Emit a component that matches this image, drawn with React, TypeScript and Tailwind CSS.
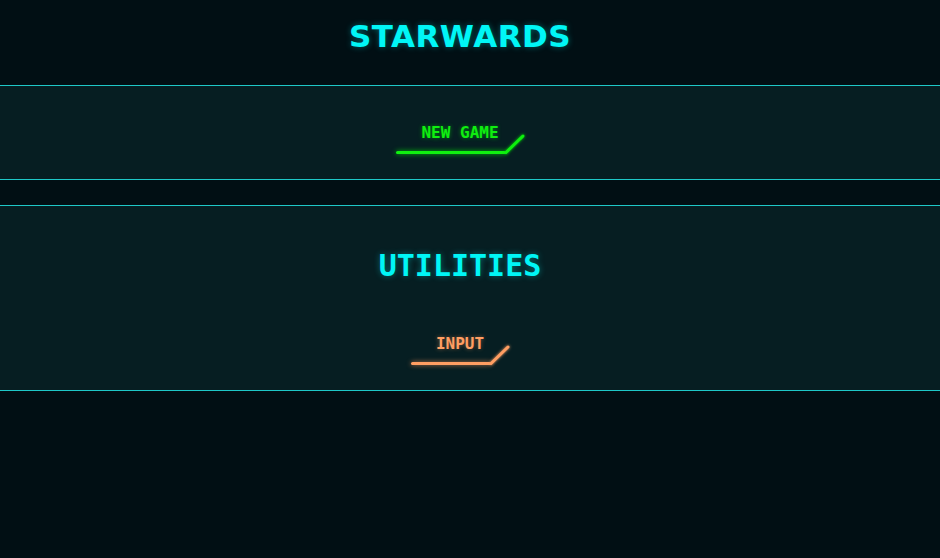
function GlowButton({ label, color }: { label: string; color: "green" | "orange" }) {
    const isGreen = color === "green";
    const stroke = isGreen ? "#10f010" : "#ff9e62";
    return (
        <button className="flex flex-col items-stretch bg-transparent cursor-pointer">
            <span
                className={`px-[25px] h-5 leading-5 text-[16px] font-bold ${
                    isGreen
                        ? "text-[#10ee10] [text-shadow:0_0_4px_rgba(0,255,0,0.45)]"
                        : "text-[#ff9e62] [text-shadow:0_0_4px_rgba(255,150,90,0.45)]"
                }`}
            >
                {label}
            </span>
            <div className="-mt-[8px] flex items-end h-5">
                <div
                    className={`flex-1 h-[3px] rounded-full mb-[1px] ${
                        isGreen
                            ? "bg-[#10f010] shadow-[0_0_5px_rgba(0,255,0,0.75)]"
                            : "bg-[#ff9e62] shadow-[0_0_5px_rgba(255,150,90,0.75)]"
                    }`}
                />
                <svg width="19" height="20" viewBox="0 0 19 20" className="overflow-visible -ml-[1px]">
                    <filter id={`f-${color}`} x="-50%" y="-50%" width="200%" height="200%">
                        <feGaussianBlur stdDeviation="1.4" result="b" />
                        <feMerge>
                            <feMergeNode in="b" />
                            <feMergeNode in="SourceGraphic" />
                        </feMerge>
                    </filter>
                    <line
                        x1="1"
                        y1="17.5"
                        x2="18"
                        y2="1"
                        stroke={stroke}
                        strokeWidth="3"
                        strokeLinecap="round"
                        filter={`url(#f-${color})`}
                    />
                </svg>
            </div>
        </button>
    );
}

export default function App() {
    return (
        <div className="min-h-[558px] w-full bg-[#010f14] font-['DejaVu_Sans_Mono',monospace]">
            <header className="flex h-[86px] items-start justify-center pr-5 pt-4 border-b border-[#1ec8c8]">
                <h1 className="h-10 leading-10 text-[31px] font-bold tracking-[0.5px] text-[#00f6f6] font-['DejaVu_Sans',sans-serif] [text-shadow:0_0_6px_rgba(0,255,255,0.35)]">
                    STARWARDS
                </h1>
            </header>
            <section className="flex justify-center pr-5 bg-[#061e22] border-b border-[#1ec8c8] pt-[37px] pb-[24px]">
                <GlowButton label="NEW GAME" color="green" />
            </section>
            <section className="mt-[25px] flex flex-col items-center pr-5 bg-[#061e22] border-y border-[#1ec8c8] pt-[42px] pb-[24px]">
                <h2 className="h-9 leading-9 text-[30px] font-bold text-[#00f6f6] [text-shadow:0_0_6px_rgba(0,255,255,0.35)]">
                    UTILITIES
                </h2>
                <div className="mt-[50px]">
                    <GlowButton label="INPUT" color="orange" />
                </div>
            </section>
        </div>
    );
}
